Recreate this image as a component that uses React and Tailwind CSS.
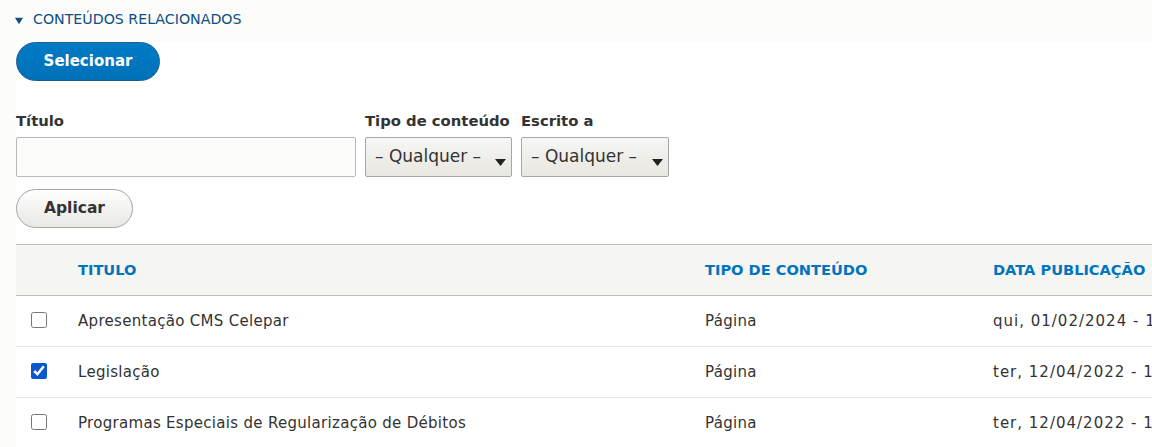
import { useState } from 'react';

const rows = [
    { title: 'Apresentação CMS Celepar', type: 'Página', date: 'qui, 01/02/2024 - 10:15', checked: false },
    { title: 'Legislação', type: 'Página', date: 'ter, 12/04/2022 - 14:07', checked: true },
    { title: 'Programas Especiais de Regularização de Débitos', type: 'Página', date: 'ter, 12/04/2022 - 14:07', checked: false },
];

function Caret() {
    return (
        <svg width="8" height="8" viewBox="0 0 10 10" className="shrink-0">
            <path d="M0 1 L10 1 L5 9 Z" fill="currentColor" />
        </svg>
    );
}

function SelectBox({ width }) {
    return (
        <div className={`${width} h-[40px] flex items-center justify-between pl-[9px] pr-[5px] rounded-[2px] border border-[#a6a6a6] bg-gradient-to-b from-[#f6f6f3] to-[#e8e7e1] text-[#333] text-[17px]`}>
            <span className="whitespace-nowrap">– Qualquer –</span>
            <svg width="11" height="8" viewBox="0 0 11 8" className="mt-[12px] shrink-0">
                <path d="M0 0 L11 0 L5.5 7 Z" fill="#222" />
            </svg>
        </div>
    );
}

export default function App() {
    const [items, setItems] = useState(rows);

    const toggle = (i) => {
        setItems(items.map((r, j) => (j === i ? { ...r, checked: !r.checked } : r)));
    };

    return (
        <div className="w-[1152px] h-[447px] overflow-hidden bg-[#fcfcfa] text-[#333]" style={{ fontFamily: '"DejaVu Sans", sans-serif' }}>
            {/* details summary */}
            <div className="h-[42px] flex items-center gap-[10px] pl-[15px] text-[#0d4f84] text-[14.2px] uppercase">
                <Caret />
                <span className="-mt-[2px]">Conteúdos relacionados</span>
            </div>

            <div className="ml-[16px] bg-white w-[1300px]">
                <button className="h-[39px] w-[144px] rounded-full border border-[#1e5c90] bg-gradient-to-b from-[#007bc6] to-[#0071b8] text-white font-bold text-[15px]">
                    Selecionar
                </button>

                {/* filters */}
                <div className="flex items-start gap-[9px] mt-[31px]">
                    <div className="flex flex-col gap-[7px]">
                        <label className="font-bold text-[14.8px] leading-[18px]">Título</label>
                        <input type="text" className="w-[340px] h-[40px] rounded-[2px] border border-[#b8b8b8] bg-[#fcfcfa] px-2 outline-none" />
                    </div>
                    <div className="flex flex-col gap-[7px]">
                        <label className="font-bold text-[14.8px] leading-[18px] whitespace-nowrap">Tipo de conteúdo</label>
                        <SelectBox width="w-[147px]" />
                    </div>
                    <div className="flex flex-col gap-[7px]">
                        <label className="font-bold text-[14.8px] leading-[18px]">Escrito a</label>
                        <SelectBox width="w-[148px]" />
                    </div>
                </div>

                <button className="mt-[12px] h-[39px] w-[117px] rounded-full border border-[#a6a6a6] bg-gradient-to-b from-[#fefefe] to-[#e8e8e4] text-[#333] font-bold text-[15.5px]">
                    Aplicar
                </button>

                {/* table */}
                <table className="mt-[16px] w-[1300px] border-collapse text-[15px] tracking-[0.3px]">
                    <thead>
                        <tr className="bg-[#f5f5f2] border-t border-b border-[#bfbfba] h-[51px]">
                            <th className="w-[46px]"></th>
                            <th className="w-[627px] text-left pl-[16px] font-bold text-[14.6px] tracking-normal text-[#0074bd] uppercase">Titulo</th>
                            <th className="w-[288px] text-left pl-[16px] font-bold text-[14.6px] tracking-normal text-[#0074bd] uppercase">Tipo de conteúdo</th>
                            <th className="text-left pl-[16px] font-bold text-[14.6px] tracking-normal text-[#0074bd] uppercase whitespace-nowrap">Data publicação</th>
                        </tr>
                    </thead>
                    <tbody>
                        {items.map((r, i) => (
                            <tr key={i} className="h-[51px] border-b border-[#e6e4df]">
                                <td className="text-center align-middle">
                                    <input
                                        type="checkbox"
                                        checked={r.checked}
                                        onChange={() => toggle(i)}
                                        className="w-[16px] h-[16px] mt-[5px] accent-[#0b57d0]"
                                    />
                                </td>
                                <td className="pl-[16px] whitespace-nowrap">{r.title}</td>
                                <td className="pl-[16px]">{r.type}</td>
                                <td className="pl-[16px] whitespace-nowrap tracking-[1px]">{r.date}</td>
                            </tr>
                        ))}
                    </tbody>
                </table>
            </div>
        </div>
    );
}
